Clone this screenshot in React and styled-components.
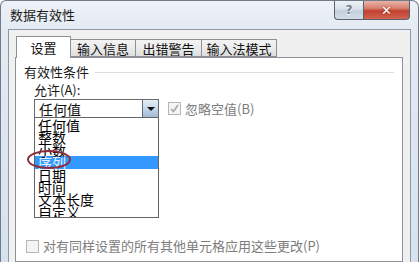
import React from "react";
import styled, { createGlobalStyle } from "styled-components";

const Global = createGlobalStyle`
  html, body { margin: 0; padding: 0; background: #ffffff; }
  body { font-family: "Noto Sans CJK SC", "Noto Sans", sans-serif; }
  #root { width: 419px; height: 262px; overflow: hidden; }
`;

const Window = styled.div`
  box-sizing: border-box;
  width: 419px;
  height: 262px;
  display: flex;
  flex-direction: column;
  border: 1px solid #6f7c88;
  border-bottom: none;
  border-radius: 6px 7px 0 0;
  background: linear-gradient(180deg, #eef2f7 0%, #e3eaf2 30px, #d6e2ee 100%);
  overflow: hidden;
`;

const TitleBar = styled.div`
  height: 28px;
  flex: none;
  display: flex;
  align-items: flex-start;
  padding: 0 8px 0 9px;
`;

const Title = styled.div`
  flex: 1;
  font-size: 13px;
  line-height: 16px;
  padding-top: 6px;
  color: #1b1b1b;
`;

const CapButton = styled.div`
  box-sizing: border-box;
  height: 19px;
  display: flex;
  align-items: center;
  justify-content: center;
  border: 1px solid #58636f;
  border-top: none;
  font-family: "DejaVu Sans", sans-serif;
  font-weight: bold;
  color: #ffffff;
`;

const HelpButton = styled(CapButton)`
  width: 29px;
  border-right: none;
  border-radius: 0 0 0 4px;
  background: linear-gradient(180deg, #eef2f6 0%, #d9e1ea 45%, #c3cfdc 55%, #d3dde8 100%);
  color: #6f7f90;
  font-size: 12px;
  text-shadow: 0 1px 0 #ffffff;
`;

const CloseButton = styled(CapButton)`
  width: 47px;
  border-radius: 0 0 4px 0;
  background: linear-gradient(180deg, #e9b4a9 0%, #d7806f 40%, #c2402f 55%, #d06452 100%);
  font-size: 13px;
  text-shadow: 0 0 2px #7a1d12;
`;

const Client = styled.div`
  flex: 1;
  display: flex;
  flex-direction: column;
  margin: 0 7px 0 7px;
  background: #f0f0f0;
  border: 1px solid #8e99a5;
  border-bottom: none;
  padding: 6px 7px 0 6px;
  min-height: 0;
`;

const TabRow = styled.div`
  display: flex;
  align-items: flex-end;
  height: 21px;
  padding-left: 1px;
  position: relative;
  z-index: 1;
`;

const Tab = styled.div`
  box-sizing: border-box;
  width: ${(p) => p.$w}px;
  height: ${(p) => (p.$active ? 22 : 18)}px;
  border: 1px solid #8d9096;
  border-left: ${(p) => (p.$first || p.$active ? "1px solid #8d9096" : "none")};
  border-bottom: ${(p) => (p.$active ? "none" : "1px solid #8d9096")};
  background: ${(p) =>
    p.$active ? "#ffffff" : "linear-gradient(180deg, #f3f3f3 0%, #ebebeb 50%, #dedede 100%)"};
  font-size: 13px;
  line-height: 16px;
  color: #111111;
  display: flex;
  justify-content: center;
  padding-top: ${(p) => (p.$active ? 3 : 1)}px;
  margin-bottom: ${(p) => (p.$active ? -1 : 0)}px;
`;

const Panel = styled.div`
  flex: 1;
  position: relative;
  background: #ffffff;
  border: 1px solid #8d9096;
  margin-top: 0;
  padding: 6px 8px 0 8px;
  display: flex;
  flex-direction: column;
`;

const GroupHeader = styled.div`
  display: flex;
  align-items: center;
  gap: 6px;
  font-size: 13px;
  line-height: 16px;
  color: #1a1a1a;
  &::after {
    content: "";
    flex: 1;
    height: 1px;
    background: #d8dfe4;
  }
`;

const Label = styled.div`
  font-size: 13px;
  line-height: 16px;
  color: #1a1a1a;
  margin: 2px 0 0 10px;
`;

const FieldRow = styled.div`
  display: flex;
  align-items: center;
  gap: 9px;
  margin: 1px 0 0 10px;
`;

const Combo = styled.div`
  box-sizing: border-box;
  width: 125px;
  height: 19px;
  border: 1px solid #6b6b6b;
  display: flex;
  align-items: center;
  background: #ffffff;
`;

const ComboText = styled.div`
  flex: 1;
  font-size: 14px;
  line-height: 16px;
  padding-left: 4px;
  color: #111111;
`;

const ComboButton = styled.div`
  box-sizing: border-box;
  width: 16px;
  height: 17px;
  border-left: 1px solid #5d6d7e;
  background: linear-gradient(180deg, #e4eef8 0%, #c5d8ea 50%, #9fbbd6 100%);
  display: flex;
  align-items: center;
  justify-content: center;
`;

const Arrow = styled.div`
  width: 0;
  height: 0;
  border-left: 4px solid transparent;
  border-right: 4px solid transparent;
  border-top: 4px solid #111111;
`;

const Check = styled.div`
  display: flex;
  align-items: center;
  gap: 4px;
  font-size: 13px;
  line-height: 16px;
  color: #7d7d7d;
  margin: ${(p) => p.$m || "0"};
`;

const CheckBox = styled.div`
  box-sizing: border-box;
  width: 13px;
  height: 13px;
  border: 1px solid #b5b5b5;
  background: #f4f4f4;
  display: flex;
  align-items: center;
  justify-content: center;
`;

const ListBox = styled.div`
  box-sizing: border-box;
  width: 125px;
  height: 101px;
  margin: -1px 0 0 10px;
  border: 1px solid #646464;
  background: #ffffff;
  padding-top: 1px;
  overflow: hidden;
`;

const Item = styled.div`
  font-size: 14px;
  line-height: 12.4px;
  height: 12.4px;
  padding-left: 3px;
  color: ${(p) => (p.$sel ? "#e8f2ff" : "#000000")};
  background: ${(p) => (p.$sel ? "#3399ff" : "transparent")};
`;

const Ring = styled.div`
  position: absolute;
  width: 40px;
  height: 15px;
  border: 2.5px solid #8c2b3c;
  border-radius: 50%;
  pointer-events: none;
`;

const Bottom = styled.div`
  margin-top: 20px;
`;

const items = ["任何值", "整数", "小数", "序列", "日期", "时间", "文本长度", "自定义"];

const CheckMark = () => (
  <svg width="11" height="11" viewBox="0 0 11 11">
    <path d="M2 6 L4.5 8.5 L9 2" fill="none" stroke="#a8a8a8" strokeWidth="1.6" />
  </svg>
);

export default function App() {
  return (
    <>
      <Global />
      <Window>
        <TitleBar>
          <Title>数据有效性</Title>
          <HelpButton>?</HelpButton>
          <CloseButton>✕</CloseButton>
        </TitleBar>
        <Client>
          <TabRow>
            <Tab $w={55} $active>设置</Tab>
            <Tab $w={65}>输入信息</Tab>
            <Tab $w={66}>出错警告</Tab>
            <Tab $w={75}>输入法模式</Tab>
          </TabRow>
          <Panel>
            <GroupHeader>有效性条件</GroupHeader>
            <Label>允许(A):</Label>
            <FieldRow>
              <Combo>
                <ComboText>任何值</ComboText>
                <ComboButton>
                  <Arrow />
                </ComboButton>
              </Combo>
              <Check>
                <CheckBox>
                  <CheckMark />
                </CheckBox>
                忽略空值(B)
              </Check>
            </FieldRow>
            <ListBox>
              {items.map((t, i) => (
                <Item key={t} $sel={i === 3}>
                  {t}
                </Item>
              ))}
            </ListBox>
            <Bottom>
              <Check $m="0 0 0 2px">
                <CheckBox />
                对有同样设置的所有其他单元格应用这些更改(P)
              </Check>
            </Bottom>
            <Ring style={{ left: 11, top: 92 }} />
          </Panel>
        </Client>
      </Window>
    </>
  );
}
